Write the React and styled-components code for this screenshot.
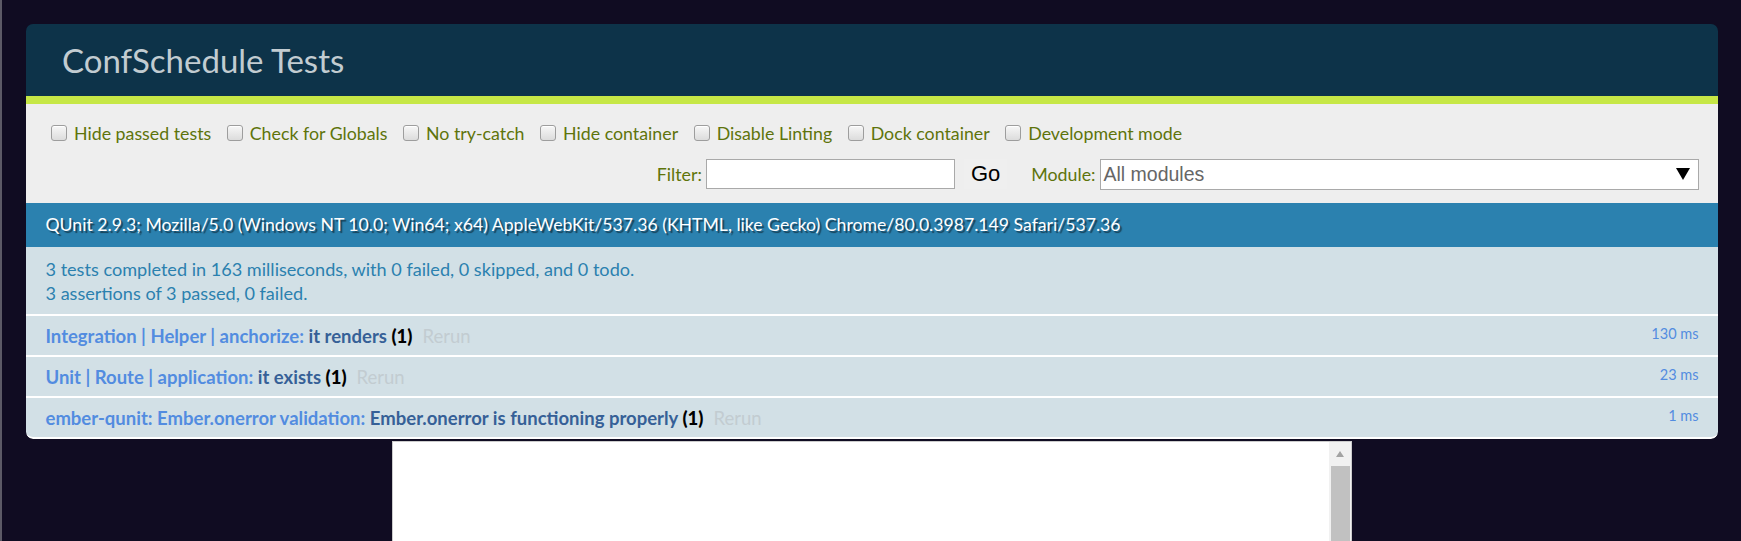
import React from "react";
import styled, { createGlobalStyle } from "styled-components";

const GlobalStyle = createGlobalStyle`
  html, body {
    margin: 0;
    padding: 0;
    background: #100c22;
    overflow: hidden;
  }
  body {
    font-family: "Lato", "Liberation Sans", sans-serif;
  }
`;

const options = [
	"Hide passed tests",
	"Check for Globals",
	"No try-catch",
	"Hide container",
	"Disable Linting",
	"Dock container",
	"Development mode",
];

const tests = [
	{ module: "Integration | Helper | anchorize", name: "it renders", count: 1, runtime: "130 ms" },
	{ module: "Unit | Route | application", name: "it exists", count: 1, runtime: "23 ms" },
	{
		module: "ember-qunit: Ember.onerror validation",
		name: "Ember.onerror is functioning properly",
		count: 1,
		runtime: "1 ms",
	},
];

const App = () => {
	return (
		<Page>
			<GlobalStyle />
			<Panel>
				<Header>ConfSchedule Tests</Header>
				<Banner />
				<Toolbar>
					<OptionRow>
						{options.map((label) => (
							<Option key={label}>
								<Check type="checkbox" />
								{label}
							</Option>
						))}
					</OptionRow>
					<FilterRow>
						<FieldLabel>Filter:</FieldLabel>
						<FilterInput type="text" />
						<GoButton>Go</GoButton>
						<FieldLabel>Module:</FieldLabel>
						<Select>
							<span>All modules</span>
							<svg width="14" height="12" viewBox="0 0 14 12">
								<polygon points="0,0 14,0 7,12" fill="#000" />
							</svg>
						</Select>
					</FilterRow>
				</Toolbar>
				<UserAgent>
					QUnit 2.9.3; Mozilla/5.0 (Windows NT 10.0; Win64; x64) AppleWebKit/537.36 (KHTML,
					like Gecko) Chrome/80.0.3987.149 Safari/537.36
				</UserAgent>
				<Result>
					3 tests completed in 163 milliseconds, with 0 failed, 0 skipped, and 0 todo.
					<br />3 assertions of 3 passed, 0 failed.
				</Result>
				<TestList>
					{tests.map((t) => (
						<TestItem key={t.name}>
							<Runtime>{t.runtime}</Runtime>
							<TestTitle>
								<ModuleName>{t.module}</ModuleName>:{" "}
								<TestName>{t.name}</TestName> <Counts>({t.count})</Counts>
							</TestTitle>
							<Rerun>Rerun</Rerun>
						</TestItem>
					))}
				</TestList>
			</Panel>
			<TestingContainer>
				<Scrollbar>
					<ScrollArrow>
						<svg width="8" height="6" viewBox="0 0 8 6">
							<polygon points="4,0 8,6 0,6" fill="#a3a3a3" />
						</svg>
					</ScrollArrow>
					<ScrollThumb />
				</Scrollbar>
			</TestingContainer>
		</Page>
	);
};

export default App;

const Page = styled.div`
	box-sizing: border-box;
	height: 541px;
	border-left: 2px solid #5c5a66;
	padding: 24px 23px 0 24px;
`;

const Panel = styled.div`
	border-radius: 7px;
	overflow: hidden;
`;

const Header = styled.h1`
	margin: 0;
	padding: 18px 0 18px 36px;
	background-color: #0d3349;
	color: #c2ccd1;
	font-size: 33px;
	line-height: 36px;
	font-weight: 400;
`;

const Banner = styled.div`
	height: 8px;
	background-color: #c6e746;
`;

const Toolbar = styled.div`
	padding: 17px 19.5px 13px;
	background-color: #eee;
	color: #5e740b;
	font-size: 17.8px;
`;

const OptionRow = styled.div`
	display: flex;
	align-items: center;
	height: 24px;
`;

const Option = styled.label`
	display: flex;
	align-items: center;
	margin-right: 10px;
	white-space: nowrap;
`;

const Check = styled.input`
	appearance: none;
	box-sizing: border-box;
	width: 16px;
	height: 16px;
	margin: 0 7px 0 5.5px;
	border: 1px solid #9d9d9d;
	border-radius: 3px;
	background: linear-gradient(#f7f7f7, #dcdcdc);
	box-shadow: inset 0 1px 0 #fff;
`;

const FilterRow = styled.div`
	display: flex;
	align-items: center;
	justify-content: flex-end;
	height: 32px;
	margin-top: 13px;
`;

const FieldLabel = styled.span`
	margin-right: 4px;
`;

const FilterInput = styled.input`
	box-sizing: border-box;
	width: 249px;
	height: 30px;
	margin: 0 9px 0 0;
	border: 1.5px solid #a9a9a9;
	background: #fff;
	outline: none;
`;

const GoButton = styled.button`
	height: 30px;
	margin-right: 24px;
	padding: 0 7px;
	border: none;
	background: #efefef;
	color: #000;
	font-family: "Liberation Sans", Arial, sans-serif;
	font-size: 22px;
`;

const Select = styled.div`
	box-sizing: border-box;
	display: flex;
	align-items: center;
	justify-content: space-between;
	width: 599px;
	height: 31px;
	padding: 0 8px 0 3px;
	border: 1.5px solid #a9a9a9;
	background: #fff;
	color: #666;
	font-family: "Liberation Sans", Arial, sans-serif;
	font-size: 19.5px;
`;

const UserAgent = styled.div`
	padding: 10px 19.5px;
	background-color: #2b81af;
	color: #fff;
	font-size: 17.65px;
	line-height: 24px;
	text-shadow: rgba(0, 0, 0, 0.5) 2px 2px 1px;
`;

const Result = styled.div`
	padding: 9.5px 19.5px 9.5px;
	background-color: #d2e0e6;
	color: #2b81af;
	font-size: 18.1px;
	line-height: 24px;
	border-bottom: 2px solid #fff;
`;

const TestList = styled.ol`
	margin: 0;
	padding: 0;
	list-style: none;
`;

const TestItem = styled.li`
	padding: 7.5px 19.5px;
	background-color: #d2e0e6;
	color: #528ce0;
	font-size: 18.5px;
	line-height: 24px;
	border-bottom: 2px solid #fff;

	&:last-child {
		border-radius: 0 0 7px 7px;
	}
`;

const TestTitle = styled.strong`
	font-weight: 700;
`;

const ModuleName = styled.span`
	color: #528ce0;
`;

const TestName = styled.span`
	color: #366097;
`;

const Counts = styled.b`
	color: #000;
`;

const Rerun = styled.a`
	padding: 0 10px;
	color: #c2ccd1;
	text-decoration: none;
`;

const Runtime = styled.span`
	float: right;
	font-size: 14.5px;
	line-height: 20px;
`;

const TestingContainer = styled.div`
	box-sizing: border-box;
	display: flex;
	justify-content: flex-end;
	width: 960px;
	height: 110px;
	margin: 2px auto 0;
	background: #fff;
	border: 1.5px solid #ccc;
	border-bottom: none;
`;

const Scrollbar = styled.div`
	display: flex;
	flex-direction: column;
	width: 22px;
	background: #f1f1f1;
`;

const ScrollArrow = styled.div`
	display: flex;
	align-items: center;
	justify-content: center;
	height: 24px;
`;

const ScrollThumb = styled.div`
	flex: 1;
	margin: 0 1px 0 2px;
	background: #c1c1c1;
`;
